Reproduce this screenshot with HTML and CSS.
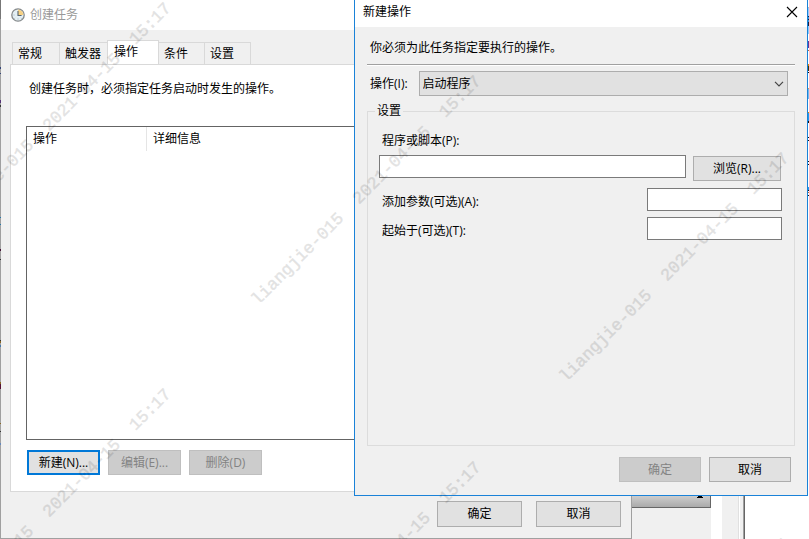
FILE: index.html
```html
<!DOCTYPE html>
<html lang="zh-CN">
<head>
<meta charset="UTF-8" />
<meta name="viewport" content="width=device-width, initial-scale=1" />
<title>创建任务</title>
<link rel="stylesheet" href="styles.css">
</head>
<body>
<main class="desktop">

  <!-- Application behind the two windows -->
  <div class="backdrop">
    <div class="backdrop-pane">
      <div class="backdrop-bar">
        <svg class="bar-arrow" viewBox="0 0 6 8"><path d="M2 0h2v6h1v1h1v1H0V7h1V6h1z" fill="#000"/></svg>
      </div>
    </div>
    <div class="backdrop-gap"></div>
    <div class="backdrop-scroll"></div>
    <div class="backdrop-page"></div>
  </div>
  <div class="edge edge-left"></div>
  <div class="edge edge-right"></div>

  <!-- Create task -->
  <section class="window task-window">
    <header class="titlebar inactive">
      <svg class="clock" viewBox="0 0 14 14">
        <circle cx="7" cy="7" r="6.2" fill="#e4eff4" stroke="#85898b" stroke-width="1.3"/>
        <path d="M7 7V1.6a5.4 5.4 0 0 1 5.4 5.4z" fill="#f7d183"/>
        <path d="M7 3v4.5h3.6" fill="none" stroke="#56646e" stroke-width="1.1"/>
        <path d="M2.5 7h1M7 10.5v1M10.5 10.5l-.6-.6M3.5 10.5l.6-.6" stroke="#8ea2ad" stroke-width=".8"/>
      </svg>
      <span>创建任务</span>
    </header>

    <nav class="tabs">
      <button class="tab">常规</button>
      <button class="tab">触发器</button>
      <button class="tab active">操作</button>
      <button class="tab">条件</button>
      <button class="tab">设置</button>
    </nav>

    <div class="tab-panel">
      <p class="hint">创建任务时，必须指定任务启动时发生的操作。</p>
      <div class="list">
        <table>
          <thead>
            <tr><th class="col-action">操作</th><th>详细信息</th></tr>
          </thead>
        </table>
      </div>
      <div class="list-buttons">
        <button class="btn default">新建(N)...</button>
        <button class="btn" disabled>编辑(E)...</button>
        <button class="btn" disabled>删除(D)</button>
      </div>
    </div>

    <footer class="task-footer">
      <button class="btn">确定</button>
      <button class="btn">取消</button>
    </footer>
  </section>

  <!-- New action -->
  <section class="window action-dialog">
    <header class="titlebar">
      <span>新建操作</span>
      <button class="close" aria-label="关闭">
        <svg viewBox="0 0 12 12"><path d="M1 1l10 10M11 1L1 11" stroke="#000" stroke-width="1.1"/></svg>
      </button>
    </header>

    <div class="dialog-body">
      <p class="dialog-hint">你必须为此任务指定要执行的操作。</p>
      <div class="action-row">
        <label for="action">操作(I):</label>
        <div class="select-wrap">
          <select id="action"><option>启动程序</option></select>
          <svg class="chevron" viewBox="0 0 10 6"><path d="M1 .8l4 4 4-4" fill="none" stroke="#444" stroke-width="1.2"/></svg>
        </div>
      </div>

      <fieldset class="settings">
        <legend>设置</legend>
        <label class="program-label" for="program">程序或脚本(P):</label>
        <div class="program-row">
          <input type="text" id="program" />
          <button class="btn browse">浏览(R)...</button>
        </div>
        <div class="option-row">
          <label for="args">添加参数(可选)(A):</label>
          <input type="text" id="args" />
        </div>
        <div class="option-row">
          <label for="start">起始于(可选)(T):</label>
          <input type="text" id="start" />
        </div>
      </fieldset>

      <footer class="dialog-footer">
        <button class="btn" disabled>确定</button>
        <button class="btn">取消</button>
      </footer>
    </div>
  </section>

  <!-- Watermark -->
  <div class="watermark">
    <span class="mark a1">liangjie-015  2021-04-15  15:17</span>
    <span class="mark a2">liangjie-015  2021-04-15  15:17</span>
    <span class="mark b1">liangjie-015  2021-04-15  15:17</span>
    <span class="mark b2">liangjie-015  2021-04-15  15:17</span>
    <span class="mark c1">liangjie-015  2021-04-15  15:17</span>
    <span class="mark c2">liangjie-015  2021-04-15  15:17</span>
  </div>
</main>
</body>
</html>
```

FILE: styles.css
```css
* {
  box-sizing: border-box;
}

body {
  margin: 0;
  font-family: "Open Sans", "Noto Sans CJK SC", sans-serif;
  font-size: 12px;
  line-height: 16px;
  color: #000;
}

button, input, select {
  font: inherit;
  color: inherit;
  margin: 0;
}

p {
  margin: 0;
}

.desktop {
  position: relative;
  min-height: 100vh;
  overflow: hidden;
  background: #fff;
}

/* Backdrop */
.backdrop {
  display: flex;
  height: 100vh;
}

.backdrop-pane {
  flex: 1;
  padding-top: 490px;
  background: #f0f0f0;
}

.backdrop-bar {
  height: 18px;
  padding: 0 7px;
  text-align: right;
  background: linear-gradient(#e0e0e0, #aaa);
  border-right: 1px solid #666;
  border-bottom: 1px solid #666;
}

.bar-arrow {
  width: 6px;
  height: 8px;
  display: inline-block;
  vertical-align: top;
}

.backdrop-gap {
  width: 11px;
}

.backdrop-scroll {
  width: 17px;
  background: #f0f0f0;
  border-right: 1px solid #e0e0e0;
}

.backdrop-page {
  width: 69px;
  margin-left: 1px;
  border-left: 3px solid #f0f0f0;
  box-shadow: inset 1px 0 #a0a0a0, inset 2px 0 #666;
}

.edge {
  position: absolute;
  top: 0;
  bottom: 0;
  width: 1px;
}

.edge-left {
  left: 0;
  z-index: 2;
  background: linear-gradient(#777 0 19px, #a0a0a0 19px 67px, #347 67px 69px, #a0a0a0 69px 73px, #347 73px 74px, #a0a0a0 74px 100px, #537 100px 103px, #a0a0a0 103px 105px, #333 105px 107px, #a0a0a0 107px 217px, #27a 217px 218px, #a0a0a0 218px 224px, #27a 224px 225px, #a0a0a0 225px 249px, #413 249px 251px, #a0a0a0 251px 259px, #333 259px 260px, #a0a0a0 260px 340px, #333 340px 341px, #862 341px 343px, #a0a0a0 343px 345px, #47a 345px 347px, #a0a0a0 347px 382px, #862 382px 384px, #513 384px 389px, #a0a0a0 389px 423px, #862 423px 424px, #a0a0a0 424px 431px, #333 431px 432px, #a0a0a0 432px 443px, #68b 443px 445px, #a0a0a0 445px);
}

.edge-right {
  right: 0;
  background: linear-gradient(#fff 0 7px, #bbb 7px 8px, #9cf 8px 16px, #124 16px 17px, #39d 17px 19px, #124 19px 20px, #39d 20px 22px, #124 22px 26px, #8cf 26px 34px, #fff 34px 41px, #639 41px 48px, #fff 48px 50px, #b63 50px 51px, #fff 51px 64px, #d80 64px 66px, #430 66px 71px, #fff 71px 72px, #111 72px 73px, #fff 73px 88px, #d95 88px 89px, #7be 89px 99px, #fff 99px 112px, #d80 112px 113px, #29e 113px 121px, #111 121px 123px, #fff 123px 137px, #111 137px 138px, #fff 138px 140px, #111 140px 141px, #fff 141px 161px, #111 161px 162px, #fff 162px 164px, #111 164px 165px, #fff 165px 187px, #29e 187px 190px, #111 190px 191px, #fff 191px 192px, #b63 192px 193px, #fff 193px 195px, #111 195px 196px, #fff 196px);
}

/* Windows */
.window {
  position: absolute;
  top: 0;
  display: flex;
  flex-direction: column;
  background: #f0f0f0;
}

.titlebar {
  display: flex;
  align-items: center;
  background: #fff;
}

.titlebar.inactive {
  color: #999;
}

.btn {
  height: 25px;
  padding: 0;
  text-align: center;
  background: #e1e1e1;
  border: 1px solid #adadad;
}

.btn.default {
  border: 2px solid #0078d7;
}

.btn:disabled {
  color: #838383;
  background: #ccc;
  border-color: #bfbfbf;
}

/* Task window */
.task-window {
  left: 0;
  right: 177px;
  border: 1px solid #a0a0a0;
  border-top: 0;
}

.task-window .titlebar {
  height: 30px;
  padding-left: 10px;
  gap: 5px;
}

.clock {
  width: 14px;
  height: 14px;
}

.tabs {
  display: flex;
  align-items: flex-end;
  height: 34px;
  padding-left: 11px;
}

.tab {
  height: 22px;
  width: 46px;
  padding: 0 0 0 5px;
  text-align: left;
  background: #f0f0f0;
  border: 1px solid #d9d9d9;
  border-width: 1px 1px 0 0;
}

.tab:first-child {
  width: 48px;
  border-left-width: 1px;
}

.tab:nth-child(2) {
  width: 48px;
}

.tab.active {
  height: 25px;
  width: 52px;
  margin: 0 0 -1px -1px;
  padding: 0 0 3px 6px;
  background: #fff;
  border-left-width: 1px;
}

.tab-panel {
  margin: 0 9px;
  padding: 16px 15px;
  background: #fff;
  border: 1px solid #d9d9d9;
}

.hint {
  padding-left: 3px;
}

.list {
  min-height: 314px;
  margin: 29px 0 10px;
  border: 1px solid #646464;
}

.list table {
  width: 100%;
  table-layout: fixed;
  border-collapse: separate;
  border-spacing: 0;
}

.list th {
  height: 24px;
  padding: 0 6px;
  font-weight: 400;
  text-align: left;
}

.list .col-action {
  width: 120px;
  border-right: 1px solid #e5e5e5;
}

.list-buttons {
  display: flex;
  gap: 8px;
  padding-left: 1px;
}

.list-buttons .btn {
  width: 73px;
}

.task-footer {
  display: flex;
  justify-content: flex-end;
  gap: 14px;
  padding: 9px 10px 11px;
}

.task-footer .btn {
  width: 85px;
  height: 26px;
}

/* Action dialog */
.action-dialog {
  left: 354px;
  right: 1px;
  border: 1px solid #1a82d8;
  border-top: 0;
}

.action-dialog .titlebar {
  height: 27px;
  justify-content: space-between;
  padding: 0 9px 4px 8px;
}

.close {
  display: flex;
  padding: 0;
  background: none;
  border: 0;
}

.close svg {
  width: 12px;
  height: 12px;
}

.dialog-body {
  padding: 13px 12px;
}

.dialog-hint {
  padding: 0 3px 8px;
  border-bottom: 1px solid #a0a0a0;
  box-shadow: 0 1px #fff;
}

.action-row {
  display: flex;
  align-items: center;
  gap: 11px;
  margin: 6px 7px 7px 3px;
}

.select-wrap {
  position: relative;
  flex: 1;
}

.select-wrap select {
  display: block;
  width: 100%;
  height: 25px;
  padding: 0 3px;
  appearance: none;
  background: #e1e1e1;
  border: 1px solid #adadad;
  border-radius: 0;
}

.chevron {
  position: absolute;
  right: 4px;
  top: 10px;
  width: 10px;
  height: 6px;
}

.settings {
  min-height: 343px;
  margin: 0;
  padding: 14px 13px 0 11px;
  border: 1px solid #dcdcdc;
}

.settings legend {
  margin-left: -4px;
  padding: 0 2px;
}

.settings input {
  height: 23px;
  border: 1px solid #7a7a7a;
  background: #fff;
}

.program-label {
  display: block;
  padding-left: 3px;
}

.program-row {
  display: flex;
  gap: 7px;
  margin: 6px 0 7px;
}

.program-row input {
  flex: 1;
  min-width: 0;
}

.browse {
  width: 88px;
  margin-top: 1px;
}

.option-row {
  display: flex;
  align-items: center;
  justify-content: space-between;
  padding-left: 3px;
  margin: 0 -1px 6px 0;
}

.option-row label {
  padding-top: 4px;
}

.option-row input {
  width: 135px;
}

.dialog-footer {
  display: flex;
  justify-content: flex-end;
  gap: 8px;
  margin: 11px 4px 0;
}

.dialog-footer .btn {
  width: 82px;
}

/* Watermark */
.watermark {
  position: absolute;
  inset: 0;
  z-index: 3;
  overflow: hidden;
  pointer-events: none;
}

.mark {
  position: absolute;
  font: 17px/20px "Liberation Mono", monospace;
  white-space: pre;
  color: #000;
  -webkit-text-stroke: 0.5px #000;
  opacity: 0.11;
  transform: translate(-50%, -50%) rotate(-45deg);
}

.a1 { left: 57px; top: 118px; }
.a2 { left: 57px; top: 504px; }
.b1 { left: 367px; top: 191px; }
.b2 { left: 367px; top: 577px; }
.c1 { left: 675px; top: 268px; }
.c2 { left: 675px; top: 654px; }
```
